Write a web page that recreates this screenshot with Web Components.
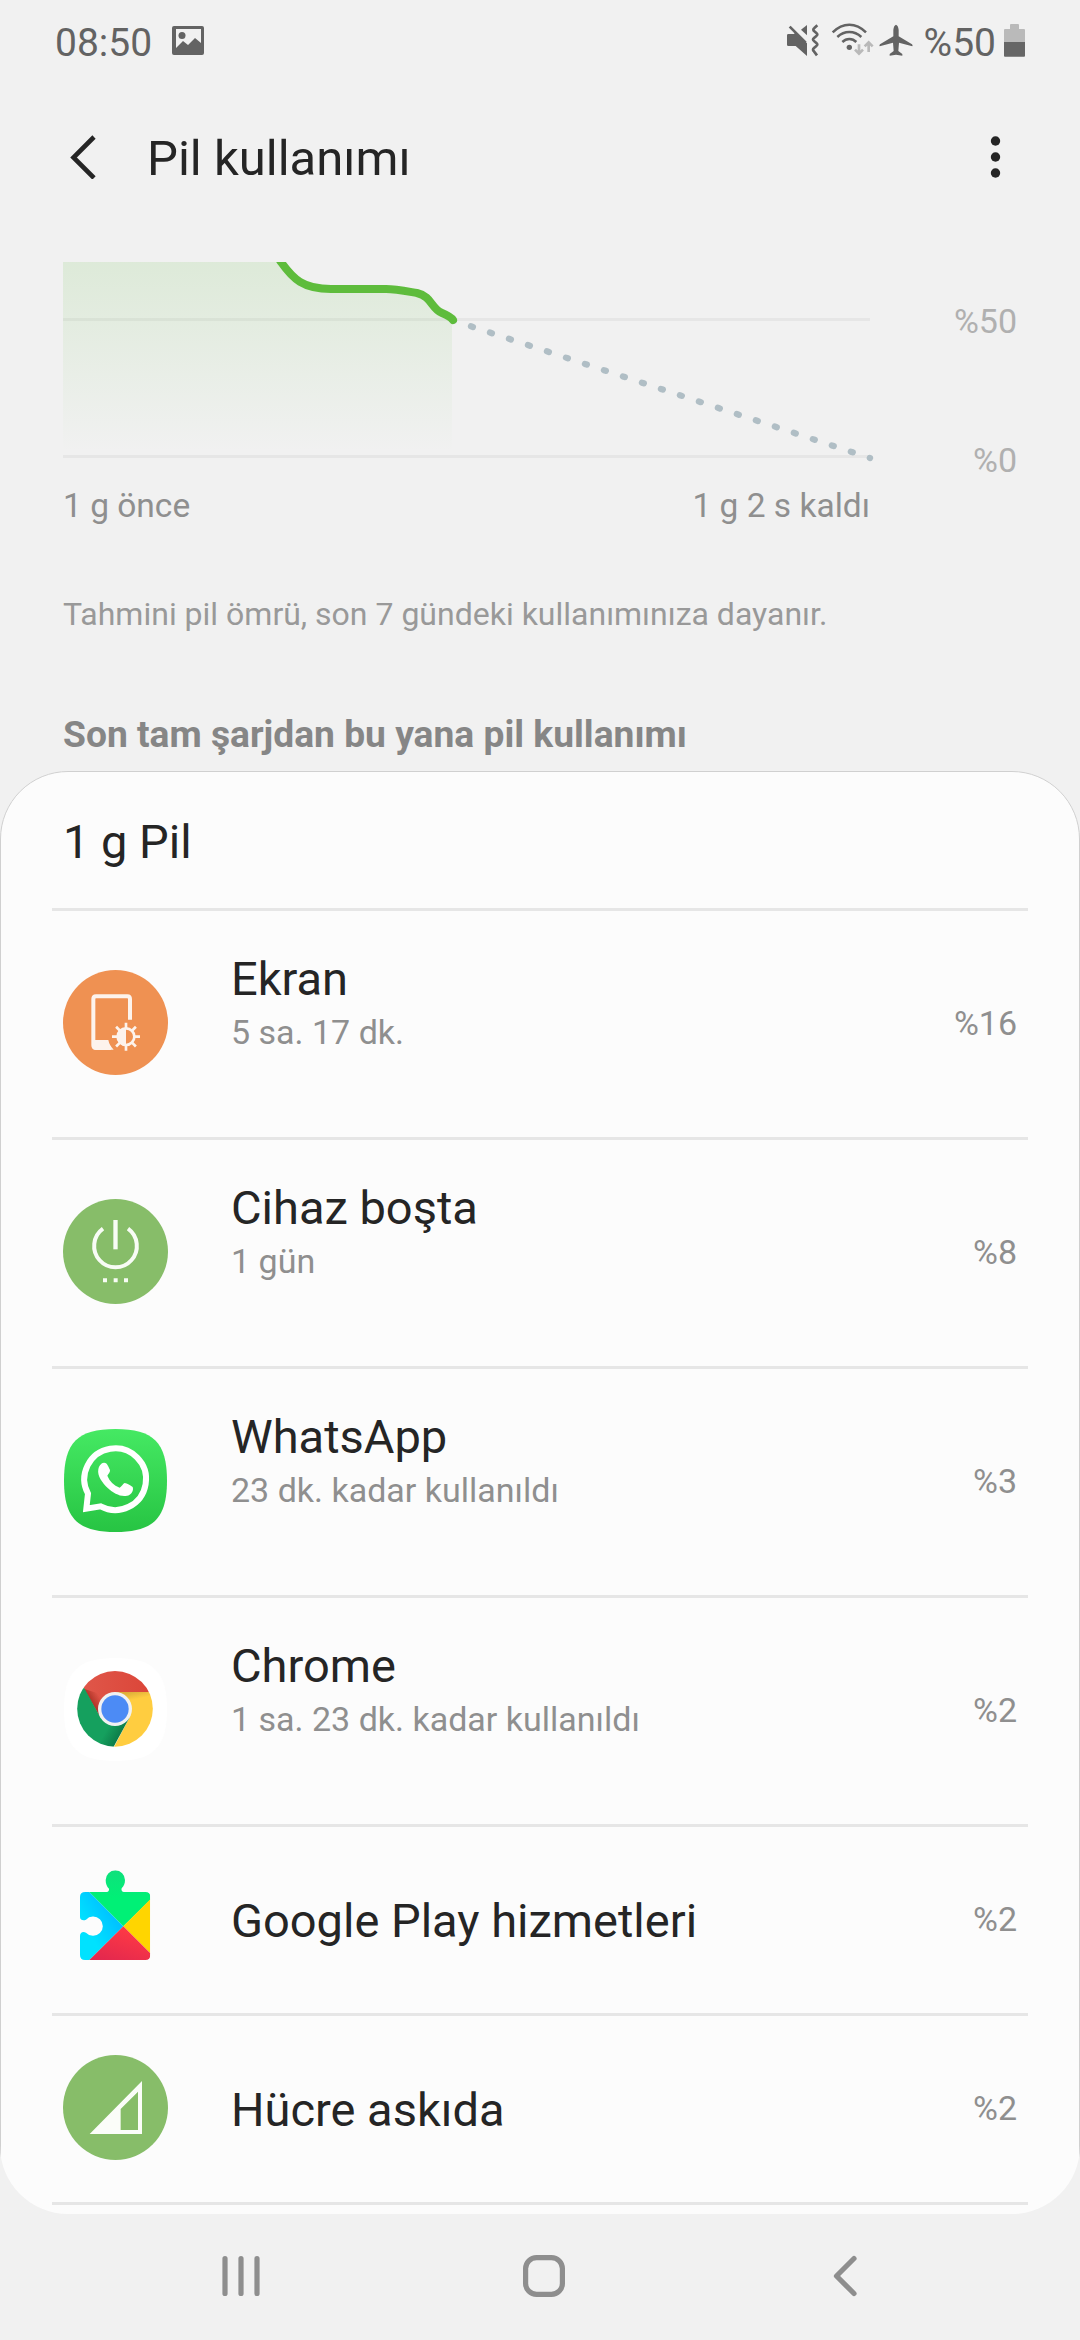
<!DOCTYPE html>
<html lang="tr">
<head>
<meta charset="utf-8">
<title>Pil kullanımı</title>
<style>
  body {
    margin: 0;
    width: 1080px;
    height: 2340px;
    overflow: hidden;
    background: #f1f1f1;
    color: #252525;
    font-family: Roboto, sans-serif;
  }
</style>
</head>
<body>
<battery-page>
  <status-bar time="08:50" level="%50"></status-bar>
  <app-bar>Pil kullanımı</app-bar>
  <battery-chart start="1 g önce" end="1 g 2 s kaldı"></battery-chart>
  <page-note>Tahmini pil ömrü, son 7 gündeki kullanımınıza dayanır.</page-note>
  <section-title>Son tam şarjdan bu yana pil kullanımı</section-title>
  <usage-card heading="1 g Pil">
    <usage-row icon="screen" label="Ekran" detail="5 sa. 17 dk." percent="%16"></usage-row>
    <usage-row icon="idle" label="Cihaz boşta" detail="1 gün" percent="%8"></usage-row>
    <usage-row icon="whatsapp" label="WhatsApp" detail="23 dk. kadar kullanıldı" percent="%3"></usage-row>
    <usage-row icon="chrome" label="Chrome" detail="1 sa. 23 dk. kadar kullanıldı" percent="%2"></usage-row>
    <usage-row icon="play" label="Google Play hizmetleri" percent="%2"></usage-row>
    <usage-row icon="cell" label="Hücre askıda" percent="%2"></usage-row>
  </usage-card>
  <nav-bar></nav-bar>
</battery-page>

<script>
// App icons, 105px box
const icons = {
  screen: `
    <svg viewBox="69 90 315 315">
      <circle cx="226.5" cy="247.5" r="157.5" fill="#ef9152"/>
      <path d="M270 239V177q0-8-8-8H168q-8 0-8 8v139q0 8 8 8h45" fill="none" stroke="#fdf3ec" stroke-width="12"/>
      <path d="M160 300h45q3 16 16 29h-53q-8 0-8-8z" fill="#fdf3ec"/>
      <circle cx="258" cy="290" r="25" fill="none" stroke="#fdf3ec" stroke-width="8"/>
      <path d="M258 263a27 27 0 0 0 0 54z" fill="#fdf3ec"/>
      <path d="M258 248v16M258 316v16M216 290h16M284 290h16M228.300 260.300l11 11M276.700 308.700l11 11M228.300 319.700l11-11M276.700 271.300l11-11" stroke="#fdf3ec" stroke-width="8"/>
    </svg>`,
  idle: `
    <svg viewBox="69 57 315 315">
      <circle cx="226.500" cy="214.500" r="157.500" fill="#87bd69"/>
      <path d="M189 146a64 64 0 1 0 75 0" fill="none" stroke="#f8fcf5" stroke-width="12"/>
      <path d="M226.500 120v88" stroke="#f8fcf5" stroke-width="13"/>
      <path d="M189 295h12v12h-12zM221 295h12v12h-12zM252 295h12v12h-12z" fill="#f8fcf5"/>
    </svg>`,
  whatsapp: `
    <svg viewBox="69 84 315 315">
      <defs>
        <linearGradient id="wa" x1="0" y1="0" x2="0" y2="1">
          <stop offset="0" stop-color="#45e963"/>
          <stop offset="1" stop-color="#27c443"/>
        </linearGradient>
      </defs>
      <path d="M226.500 87C340 87 381 128 381 241.500S340 396 226.500 396 72 355 72 241.500 113 87 226.500 87z" fill="url(#wa)"/>
      <path d="M144 281A92.500 92.500 0 1 1 182 319L139 326z" fill="none" stroke="#fff" stroke-width="18"/>
      <path d="M184 191c4-3 11-4 16 0 4 5 7 13 10 19 1 6-5 12-8 17 7 17 19 29 37 36 6-3 10-12 15-14 7 1 18 7 24 12 3 9-1 18-9 23-20 12-47-3-65-19-17-16-33-38-29-57 1-7 4-12 9-17z" fill="#fff"/>
    </svg>`,
  chrome: `
    <svg viewBox="69 771 315 315">
      <defs>
        <clipPath id="disc"><circle cx="225" cy="926.500" r="113.500"/></clipPath>
        <linearGradient id="cr" x1="0" y1="0" x2="1" y2="0">
          <stop offset="0" stop-color="#e0594c"/>
          <stop offset="1" stop-color="#db4437"/>
        </linearGradient>
        <linearGradient id="cy" gradientUnits="userSpaceOnUse" x1="270" y1="876" x2="275" y2="900">
          <stop offset="0" stop-color="#dcae3a"/>
          <stop offset="1" stop-color="#ffcd40"/>
        </linearGradient>
        <linearGradient id="cg" gradientUnits="userSpaceOnUse" x1="205" y1="980" x2="242" y2="1001">
          <stop offset="0" stop-color="#15a05e"/>
          <stop offset="1" stop-color="#0d7d49"/>
        </linearGradient>
        <linearGradient id="cs" gradientUnits="userSpaceOnUse" x1="155" y1="903" x2="178" y2="889">
          <stop offset="0" stop-color="#b23529"/>
          <stop offset="1" stop-color="#b23529" stop-opacity="0"/>
        </linearGradient>
      </defs>
      <path d="M226.500 774C340 774 381 815 381 928.500S340 1083 226.500 1083 72 1042 72 928.500 113 774 226.500 774z" fill="#fff"/>
      <g clip-path="url(#disc)">
        <path d="M100 800h250v76H225l-44 76-48-84z" fill="url(#cr)"/>
        <path d="M131 866l50 86 30-60z" fill="url(#cs)"/>
        <path d="M225 876h130v180H214l55-104z" fill="url(#cy)"/>
        <path d="M133 865l48 87 44 25 44-25-49 90H100V865z" fill="url(#cg)"/>
      </g>
      <circle cx="225" cy="927" r="51" fill="#f1f1f1"/>
      <circle cx="225" cy="927" r="41" fill="#4c8bf5"/>
    </svg>`,
  play: `
    <svg viewBox="69 138 315 315">
      <defs>
        <linearGradient id="pb" x1="1" y1="0" x2="0" y2="1">
          <stop offset="0.300" stop-color="#00c3ff"/>
          <stop offset="0.700" stop-color="#00e2ff"/>
        </linearGradient>
        <linearGradient id="pg" x1="0" y1="0" x2="0" y2="1">
          <stop offset="0" stop-color="#0fe07c"/>
          <stop offset="0.500" stop-color="#00f076"/>
        </linearGradient>
        <linearGradient id="pr" x1="0" y1="1" x2="0.600" y2="0">
          <stop offset="0" stop-color="#e0264f"/>
          <stop offset="1" stop-color="#ff3a44"/>
        </linearGradient>
        <clipPath id="piece">
          <path d="M136 216H200q8-2 7-10C200 200 197 190 197 180a29 29 0 0 1 58 0c0 10-3 18-10 25-2 6 1 11 7 11H316q15 0 15 15V405q0 15-15 15H135q-15 0-15-15V348C120 336 130 333 138 338A29 29 0 1 0 138 299C130 303 120 300 120 291V231q0-15 16-15z"/>
        </clipPath>
      </defs>
      <g clip-path="url(#piece)">
        <path d="M120 216h28l102 103-102 101h-28z" fill="url(#pb)"/>
        <path d="M148 216V150h183v89l-81 80z" fill="url(#pg)"/>
        <path d="M331 238v162l-81-81z" fill="#ffd500"/>
        <path d="M250 319l81 81v20H148z" fill="url(#pr)"/>
      </g>
    </svg>`,
  cell: `
    <svg viewBox="69 705 315 315">
      <circle cx="226.500" cy="862.500" r="157.500" fill="#87bd69"/>
      <path fill-rule="evenodd" d="M306 783V942H149zM294 815L242 867V930h52z" fill="#fbfdf9"/>
    </svg>`,
};

class BatteryPage extends HTMLElement {
  constructor() {
    super();
    this.attachShadow({ mode: 'open' });
  }

  connectedCallback() {
    this.shadowRoot.innerHTML = `
      <style>
        :host {
          display: flex;
          flex-direction: column;
          height: 2340px;
        }
      </style>
      <slot></slot>
    `;
  }
}

class StatusBar extends HTMLElement {
  constructor() {
    super();
    this.attachShadow({ mode: 'open' });
  }

  connectedCallback() {
    this.shadowRoot.innerHTML = `
      <style>
        :host {
          display: flex;
          align-items: center;
          height: 85px;
          padding: 0 54px 0 55px;
          color: #636363;
          font-size: 39px;
          line-height: 46px;
        }
        svg { display: block; height: 41px; }
        .picture { width: 32px; margin-left: 20px; }
        .right { display: flex; align-items: center; margin-left: auto; }
        .wifi { margin: 0 4px 0 11px; }
        .level { margin: 0 7px 0 11px; }
      </style>
      <span>${this.getAttribute('time')}</span>
      <svg class="picture" viewBox="0 0 32 41">
        <path fill-rule="evenodd" fill="#636363" d="M2 4h28q2 0 2 2v25q0 2-2 2H2q-2 0-2-2V6q0-2 2-2zM4 7v19l7-7 5 4 7-7 6 5V7z"/>
        <circle cx="10" cy="13.500" r="3.500" fill="#636363"/>
      </svg>
      <div class="right">
        <svg width="33" viewBox="138 66 99 123">
          <path d="M142 102h20l-4-4 6-2 34 34v38l-34-30h-22q-4 0-4-4v-28q0-4 4-4z" fill="#636363"/>
          <path d="M146 80l48 48" stroke="#636363" stroke-width="8"/>
          <path d="M198 75v31l-18-17z" fill="#636363"/>
          <path d="M229 76l-9 8q-6 5 0 10l6 5q6 5 0 9l-7 6q-6 5 0 9l7 6q6 5 0 9l-7 6q-6 5 0 10l9 12" fill="none" stroke="#636363" stroke-width="8"/>
        </svg>
        <svg class="wifi" width="44" viewBox="270 66 132 123">
          <g fill="none" stroke="#636363" stroke-width="7.500">
            <path d="M275 97q23-23 50-23t50 23"/>
            <path d="M289 111q16-15 36-15t36 15"/>
            <path d="M304 126q9-9 21-9t21 9"/>
          </g>
          <circle cx="325" cy="142" r="8" fill="#636363"/>
          <path d="M354 133v27M342 149l12 12 12-12M383 156v-27M371 139l12-12 12 12" fill="none" stroke="#b9b9b9" stroke-width="8"/>
        </svg>
        <svg width="34" viewBox="414 66 102 123">
          <path d="M465 74q7 3 8 16v19l40 24q3 3 1 6l-40-11-2 25 12 9v5l-19-3-19 3v-5l12-9-2-25-40 11q-2-3 1-6l40-24V90q1-13 8-16z" fill="#636363"/>
        </svg>
        <span class="level">${this.getAttribute('level')}</span>
        <svg width="23" viewBox="789 66 69 123">
          <path d="M810 75q0-3 3-3h21q3 0 3 3v12h15q3 0 3 3v36h-63V90q0-3 3-3h15z" fill="#bababa"/>
          <path d="M792 126h63v41q0 3-3 3h-57q-3 0-3-3z" fill="#666"/>
        </svg>
      </div>
    `;
  }
}

class AppBar extends HTMLElement {
  constructor() {
    super();
    this.attachShadow({ mode: 'open' });
  }

  connectedCallback() {
    this.shadowRoot.innerHTML = `
      <style>
        :host {
          display: flex;
          align-items: center;
          height: 143px;
          padding: 0 79px 0 68px;
        }
        h1 {
          margin: 0 auto 0 49px;
          padding-top: 5px;
          font-size: 49px;
          font-weight: 400;
          line-height: 60px;
        }
        svg { display: block; }
      </style>
      <svg width="30" height="44" viewBox="0 0 30 44">
        <path d="M26 2L5.500 22.500 26 43" fill="none" stroke="#252525" stroke-width="4.600"/>
      </svg>
      <h1><slot></slot></h1>
      <svg width="11" height="44" viewBox="0 0 11 44" fill="#252525">
        <circle cx="5.500" cy="6" r="4.700"/>
        <circle cx="5.500" cy="22" r="4.700"/>
        <circle cx="5.500" cy="38" r="4.700"/>
      </svg>
    `;
  }
}

class BatteryChart extends HTMLElement {
  constructor() {
    super();
    this.attachShadow({ mode: 'open' });
  }

  connectedCallback() {
    this.shadowRoot.innerHTML = `
      <style>
        :host {
          display: block;
          height: 265px;
          margin-top: 34px;
          padding: 0 63px;
          font-size: 34px;
          line-height: 40px;
        }
        .plot { display: flex; justify-content: space-between; height: 224px; }
        svg { display: block; }
        .scale {
          display: flex;
          flex-direction: column;
          gap: 99px;
          padding-top: 39px;
          text-align: right;
          color: #b0b0b0;
        }
        .times {
          display: flex;
          justify-content: space-between;
          width: 807px;
          color: #8f8f8f;
          font-size: 33.500px;
        }
      </style>
      <div class="plot">
        <svg width="815" height="200" viewBox="63 262 815 200">
          <defs>
            <linearGradient id="fill" x1="0" y1="0" x2="0" y2="1">
              <stop offset="0" stop-color="#5ebc3c" stop-opacity="0.135"/>
              <stop offset="1" stop-color="#5ebc3c" stop-opacity="0"/>
            </linearGradient>
          </defs>
          <path d="M63 319.500H870M63 456.500H870" stroke="#e6e6e6" stroke-width="3"/>
          <path d="M63 262H281C293 279 303 289 331 289H386C400 289 408 291 417 293C432 297 432 309 442 313C448 316 450 316 452 320V452H63z" fill="url(#fill)"/>
          <path d="M452 320L870 458" stroke="#b0bec5" stroke-width="6.300" stroke-linecap="round" stroke-dasharray="2 18"/>
          <path d="M275 253L281 262C293 279 303 289 331 289H386C396 289 408 291.500 417 293C432 296.500 431 308.500 442 313C448 315.500 451 317 453 320" fill="none" stroke="#5ebc3c" stroke-width="8" stroke-linecap="round" stroke-linejoin="round"/>
        </svg>
        <div class="scale"><span>%50</span><span>%0</span></div>
      </div>
      <div class="times">
        <span>${this.getAttribute('start')}</span>
        <span>${this.getAttribute('end')}</span>
      </div>
    `;
  }
}

class PageNote extends HTMLElement {
  constructor() {
    super();
    this.attachShadow({ mode: 'open' });
  }

  connectedCallback() {
    this.shadowRoot.innerHTML = `
      <style>
        :host {
          display: block;
          margin-top: 67px;
          padding-left: 63px;
          color: #999;
          font-size: 32px;
          line-height: 40px;
        }
      </style>
      <slot></slot>
    `;
  }
}

class SectionTitle extends HTMLElement {
  constructor() {
    super();
    this.attachShadow({ mode: 'open' });
  }

  connectedCallback() {
    this.shadowRoot.innerHTML = `
      <style>
        :host {
          display: block;
          height: 59px;
          padding: 78px 0 0 63px;
          color: #868686;
          font-size: 37.200px;
          font-weight: 700;
          line-height: 44px;
        }
      </style>
      <slot></slot>
    `;
  }
}

class UsageCard extends HTMLElement {
  constructor() {
    super();
    this.attachShadow({ mode: 'open' });
  }

  connectedCallback() {
    this.shadowRoot.innerHTML = `
      <style>
        :host {
          display: block;
          height: 1443px;
          overflow: hidden;
          border-radius: 0 0 68px 68px;
        }
        .card {
          box-sizing: border-box;
          height: 1520px;
          padding: 0 51px;
          border: 1px solid #d0d0d0;
          border-radius: 68px;
          background: #fcfcfc;
        }
        h2 {
          box-sizing: border-box;
          height: 139px;
          margin: 0;
          padding: 4px 0 0 11px;
          border-bottom: 3px solid #e6e6e6;
          font-size: 47px;
          font-weight: 400;
          line-height: 132px;
        }
      </style>
      <div class="card">
        <h2>${this.getAttribute('heading')}</h2>
        <slot></slot>
      </div>
    `;
  }
}

class UsageRow extends HTMLElement {
  constructor() {
    super();
    this.attachShadow({ mode: 'open' });
  }

  connectedCallback() {
    // Rows without a detail line are lower and centre their label
    const detail = this.getAttribute('detail');
    this.shadowRoot.innerHTML = `
      <style>
        :host {
          display: flex;
          align-items: center;
          box-sizing: border-box;
          height: ${detail ? 229 : 189}px;
          padding: 0 11px 3px;
          border-bottom: 3px solid #e6e6e6;
        }
        svg { display: block; width: 105px; height: 105px; }
        .text {
          flex: 1;
          margin-left: 63px;
          padding-${detail ? 'bottom: 39px' : 'top: 5px'};
        }
        .label { font-size: 47px; line-height: 56px; }
        .detail {
          margin-top: 2px;
          color: #8f8f8f;
          font-size: 34px;
          line-height: 46px;
        }
        .percent {
          padding-top: 1px;
          color: #8f8f8f;
          font-size: 34px;
          line-height: 40px;
        }
      </style>
      ${icons[this.getAttribute('icon')]}
      <div class="text">
        <div class="label">${this.getAttribute('label')}</div>
        ${detail ? `<div class="detail">${detail}</div>` : ''}
      </div>
      <div class="percent">${this.getAttribute('percent')}</div>
    `;
  }
}

class NavBar extends HTMLElement {
  constructor() {
    super();
    this.attachShadow({ mode: 'open' });
  }

  connectedCallback() {
    this.shadowRoot.innerHTML = `
      <style>
        :host {
          display: flex;
          justify-content: space-between;
          align-items: center;
          height: 124px;
          padding: 0 212px 2px 219px;
        }
        svg {
          display: block;
          fill: none;
          stroke: #8e8e8e;
          stroke-width: 5.200;
          stroke-linecap: round;
          stroke-linejoin: round;
        }
      </style>
      <svg width="44" height="44" viewBox="0 0 44 44"><path d="M6 4.500v35M22 4.500v35M38 4.500v35"/></svg>
      <svg width="44" height="44" viewBox="0 0 44 44"><rect x="3.600" y="3.600" width="36.800" height="36.800" rx="11"/></svg>
      <svg width="44" height="44" viewBox="0 0 44 44"><path d="M30 4.500L12.500 22 30 39.500"/></svg>
    `;
  }
}

customElements.define('battery-page', BatteryPage);
customElements.define('status-bar', StatusBar);
customElements.define('app-bar', AppBar);
customElements.define('battery-chart', BatteryChart);
customElements.define('page-note', PageNote);
customElements.define('section-title', SectionTitle);
customElements.define('usage-card', UsageCard);
customElements.define('usage-row', UsageRow);
customElements.define('nav-bar', NavBar);
</script>
</body>
</html>
